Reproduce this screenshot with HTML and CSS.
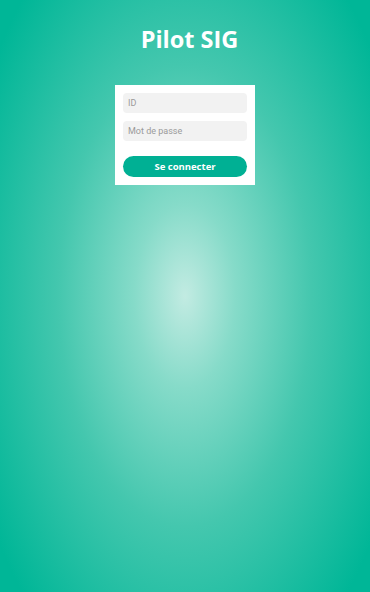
FILE: index.html
```html
<!DOCTYPE html>
<html>
<head>
  <meta charset=utf-8>
  <meta name="viewport" content="width=device-width, initial-scale=1">
  <title>Pilot SIG</title>
  <link rel="stylesheet" href="styles.css">
</head>
<body>

<div class=page>
  <h1 class=brand>Pilot SIG</h1>

  <form class=loginBox onsubmit='return false'>
    <input type=text class=field placeholder='ID' />
    <input type=password class=field placeholder='Mot de passe' />
    <button type=submit class=btnLogin>Se connecter</button>
  </form>
</div>

</body>
</html>
```

FILE: styles.css
```css
* {
  box-sizing: border-box;
  }
html, body {
  height: 100%;
  width: 100%;
  }
body {
  margin: 0;
  font-family: "Open Sans", sans-serif;
  background-color: #00b698;
  background-image: radial-gradient(ellipse 230px 420px at 50% 50%, #c2ebe2 0%, #86dbc9 22%, #44c7ae 55%, #00b697 100%);
  overflow: hidden;
  }
.page {
  display: flex;
  flex-direction: column;
  align-items: center;
  padding-top: 25px;
  }
h1.brand {
  margin: 0 0 31px;
  padding-left: 9px;
  font: bold 23.5px/29px "Open Sans", sans-serif;
  color: #fff;
  }
.loginBox {
  display: flex;
  flex-direction: column;
  gap: 8px;
  width: 140px;
  padding: 8px;
  margin: 0;
  background-color: #fff;
  }
.field {
  display: block;
  width: 100%;
  height: 20px;
  padding: 0 5px;
  margin: 0;
  border: none;
  border-radius: 4px;
  background-color: #f2f2f2;
  font: normal 9px Roboto, sans-serif;
  color: #555;
  outline: none;
  }
.field::placeholder {
  color: #9a9a9a;
  }
.btnLogin {
  display: block;
  width: 100%;
  height: 21px;
  margin-top: 7px;
  padding: 0;
  border: none;
  border-radius: 11px;
  background-color: #00b094;
  color: #fff;
  font: bold 9.5px "Open Sans", sans-serif;
  cursor: pointer;
  }
```
